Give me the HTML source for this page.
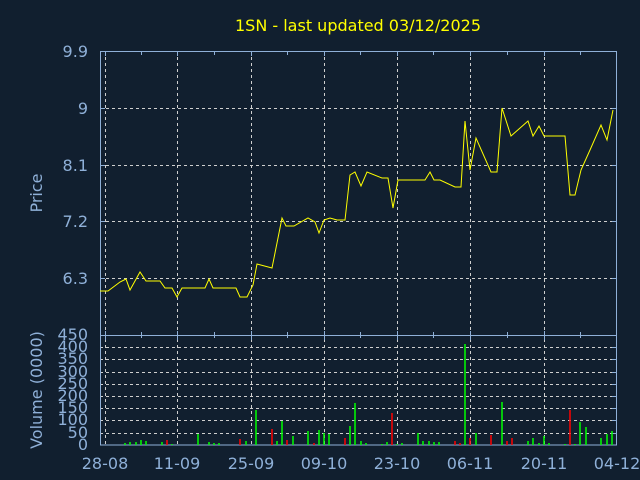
<!DOCTYPE html>
<html><head><meta charset="utf-8"><style>
html,body{margin:0;padding:0;background:#111f2f;}
svg{display:block;}
text{font-family:"DejaVu Sans","Liberation Sans",sans-serif;}
</style></head><body>
<svg width="640" height="480" viewBox="0 0 640 480" xmlns="http://www.w3.org/2000/svg">
<rect width="640" height="480" fill="#111f2f"/>
<text x="358" y="31" fill="#ffff00" font-size="16" text-anchor="middle">1SN - last updated 03/12/2025</text>
<g stroke="#cfcfcf" stroke-width="1" stroke-dasharray="3,3" fill="none">
<path d="M105.5 51V445M177.5 51V445M251.5 51V445M324.5 51V445M397.5 51V445M470.5 51V445M544.5 51V445"/>
<path d="M100 108.5H617M100 165.5H617M100 221.5H617M100 278.5H617"/>
<path d="M100 347.5H617M100 359.5H617M100 372.5H617M100 384.5H617M100 396.5H617M100 408.5H617M100 420.5H617M100 433.5H617"/>
</g>
<g stroke="#8fb0d8" stroke-width="1" fill="none">
<rect x="100.5" y="51.5" width="516" height="393.5"/>
<path d="M100 335.5H617"/>
<path d="M105.5 51v5M141.5 51v4M177.5 51v5M214.5 51v4M251.5 51v5M287.5 51v4M324.5 51v5M360.5 51v4M397.5 51v5M433.5 51v4M470.5 51v5M507.5 51v4M544.5 51v5M580.5 51v4"/>
<path d="M105.5 331v9M141.5 332v6M177.5 331v9M214.5 332v6M251.5 331v9M287.5 332v6M324.5 331v9M360.5 332v6M397.5 331v9M433.5 332v6M470.5 331v9M507.5 332v6M544.5 331v9M580.5 332v6"/>
<path d="M100 108.5h5M100 165.5h5M100 221.5h5M100 278.5h5M612 108.5h5M612 165.5h5M612 221.5h5M612 278.5h5"/>
<path d="M612 347.5h5M612 359.5h5M612 372.5h5M612 384.5h5M612 396.5h5M612 408.5h5M612 420.5h5M612 433.5h5"/>
</g>
<g fill="#8fb0d8" font-size="16" text-anchor="end">
<text x="88" y="57">9.9</text><text x="88" y="114">9</text><text x="88" y="171">8.1</text><text x="88" y="227">7.2</text><text x="88" y="284">6.3</text>
<text x="88" y="340">450</text><text x="88" y="352">400</text><text x="88" y="364">350</text><text x="88" y="377">300</text><text x="88" y="389">250</text><text x="88" y="401">200</text><text x="88" y="413">150</text><text x="88" y="425">100</text><text x="88" y="438">50</text><text x="88" y="450">0</text>
</g>
<g fill="#8fb0d8" font-size="16" text-anchor="middle">
<text x="105" y="469">28-08</text><text x="177" y="469">11-09</text><text x="251" y="469">25-09</text><text x="324" y="469">09-10</text><text x="397" y="469">23-10</text><text x="470" y="469">06-11</text><text x="544" y="469">20-11</text><text x="617" y="469">04-12</text>
</g>
<text transform="translate(42,193) rotate(-90)" fill="#8fb0d8" font-size="16" text-anchor="middle">Price</text>
<text transform="translate(42,390) rotate(-90)" fill="#8fb0d8" font-size="16" text-anchor="middle">Volume (0000)</text>
<polyline fill="none" stroke="#ffff00" stroke-width="1" points="100,291 108,291 120,282 126,279 130,290 140,272 146,281 160,281 165,288 172,288 177,297 182,288 205,288 209,279 213,288 236,288 240,297 247,297 253,285 257,264 272,268 282,218 286,226 294,226 308,218 315,222 319,233 324,220 330,218 337,220 345,220 350,175 355,172 361,186 367,172 382,178 388,178 393,208 398,180 425,180 430,172 434,180 440,180 455,187 461,187 465,121 470,170 476,138 491,172 497,172 502,108 511,136 528,121 533,136 539,126 544,136 565,136 570,195 575,195 581,170 590,150 601,125 607,140 613,110"/>
<g stroke-width="1.5">
<path stroke="#00ff00" d="M125 445V443M130 445V442M136 445V442M141 445V440M146 445V441M162 445V442M172 445V444M198 445V434M209 445V442M214 445V443M219 445V443M246 445V441M256 445V410M277 445V441M282 445V421M293 445V436M308 445V431M319 445V430M324 445V433M329 445V434M350 445V426M355 445V403M361 445V441M366 445V443M382 445V444M387 445V442M397 445V444M402 445V443M418 445V433M423 445V441M429 445V441M434 445V442M439 445V442M465 445V344M476 445V433M502 445V402M528 445V441M533 445V438M539 445V443M544 445V436M549 445V443M565 445V444M575 445V444M580 445V422M586 445V427M601 445V438M607 445V434M612 445V431"/>
<path stroke="#ff0000" d="M167 445V440M240 445V439M272 445V429M287 445V440M314 445V443M345 445V438M392 445V413M455 445V441M460 445V443M470 445V438M491 445V435M507 445V441M512 445V438M570 445V410"/>
</g>
</svg>
</body></html>
